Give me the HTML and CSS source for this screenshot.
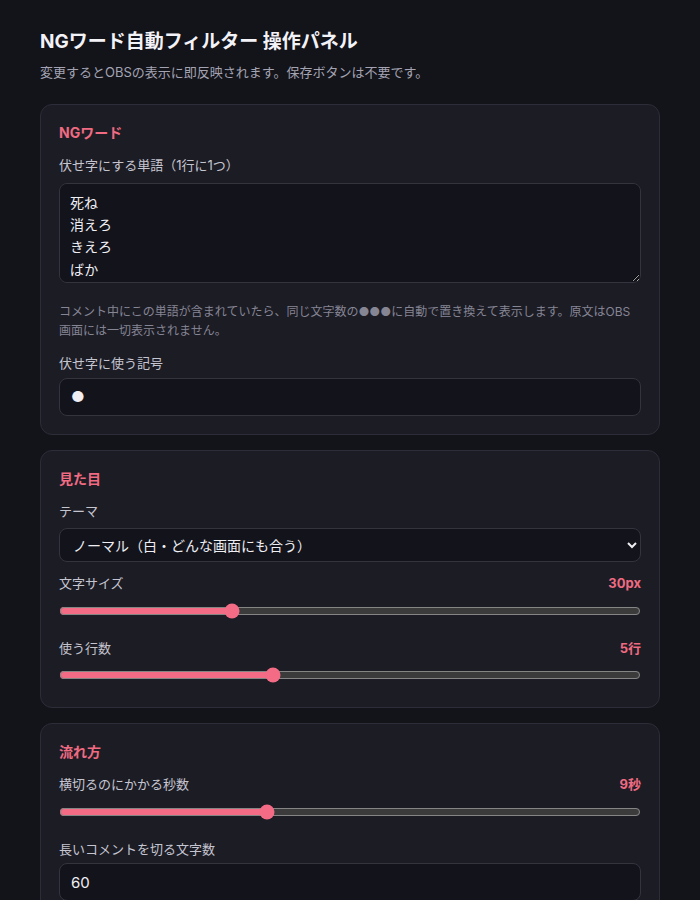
FILE: index.html
```html
<!DOCTYPE html>
<html lang="ja">
<head>
<meta charset="utf-8">
<title>NGワード自動フィルター 操作パネル</title>
<link rel="stylesheet" href="styles.css">
</head>
<body>
<main class="page">
  <h1 class="title">NGワード自動フィルター 操作パネル</h1>
  <p class="subtitle">変更するとOBSの表示に即反映されます。保存ボタンは不要です。</p>

  <section class="card">
    <h2 class="card-title">NGワード</h2>
    <div class="field field-text">
      <label class="label" for="words">伏せ字にする単語（1行に1つ）</label>
      <textarea id="words" class="textarea">死ね
消えろ
きえろ
ばか</textarea>
      <p class="help">コメント中にこの単語が含まれていたら、同じ文字数の●●●に自動で置き換えて表示します。原文はOBS画面には一切表示されません。</p>
    </div>
    <div class="field">
      <label class="label label-tight" for="mask">伏せ字に使う記号</label>
      <input id="mask" class="input" type="text" value="●">
    </div>
  </section>

  <section class="card">
    <h2 class="card-title">見た目</h2>
    <div class="field field-select">
      <label class="label" for="theme">テーマ</label>
      <select id="theme" class="select">
        <option>ノーマル（白・どんな画面にも合う）</option>
      </select>
    </div>
    <div class="field field-range">
      <div class="label-row"><span class="label">文字サイズ</span><span class="value">30px</span></div>
      <input class="range" type="range" min="16" max="64" value="30">
    </div>
    <div class="field field-range">
      <div class="label-row"><span class="label">使う行数</span><span class="value">5行</span></div>
      <input class="range" type="range" min="1" max="12" value="5">
    </div>
  </section>

  <section class="card">
    <h2 class="card-title">流れ方</h2>
    <div class="field field-range">
      <div class="label-row"><span class="label">横切るのにかかる秒数</span><span class="value">9秒</span></div>
      <input class="range" type="range" min="3" max="20" value="9">
    </div>
    <div class="field">
      <label class="label label-tight" for="maxlen">長いコメントを切る文字数</label>
      <input id="maxlen" class="input" type="text" value="60">
    </div>
  </section>
</main>
</body>
</html>
```

FILE: styles.css
```css
html, body {
  margin: 0;
  padding: 0;
  background: #13131a;
  color: #e9e9f0;
  font-family: Inter, "Noto Sans CJK JP", sans-serif;
  color-scheme: dark;
}

.page {
  padding: 28px 40px 40px;
}

.title {
  margin: 0;
  font-size: 19px;
  line-height: 28px;
  font-weight: 700;
  color: #f2f2f7;
}

.subtitle {
  margin: 6px 0 22px;
  font-size: 13px;
  line-height: 20px;
  color: #a3a3b2;
}

.card {
  background: #1c1c25;
  border: 1px solid #2d2d39;
  border-radius: 12px;
  padding: 18px 18px 18px;
  margin-bottom: 15px;
}

.card-title {
  margin: 0 0 13px;
  font-size: 14px;
  line-height: 20px;
  font-weight: 700;
  color: #f06b82;
}

.field {
  margin-bottom: 13px;
}

.field:last-child {
  margin-bottom: 0;
}

.field-select {
  margin-bottom: 12px;
}

.field-range {
  padding-bottom: 6px;
  margin-bottom: 14px;
}

.field-range:last-child {
  padding-bottom: 6px;
}

.label {
  display: block;
  font-size: 13px;
  line-height: 19.5px;
  color: #c5c5d0;
  margin-bottom: 7px;
}

.label-tight {
  margin-bottom: 4px;
}

.label-row {
  display: flex;
  justify-content: space-between;
  align-items: baseline;
  margin-bottom: 9px;
}

.label-row .label {
  margin-bottom: 0;
}

.value {
  font-size: 13px;
  line-height: 19.5px;
  font-weight: 700;
  color: #f06b82;
}

.textarea,
.input,
.select {
  display: block;
  width: 100%;
  box-sizing: border-box;
  background: #13131b;
  border: 1px solid #34343f;
  border-radius: 8px;
  color: #eeeef3;
  font-family: Inter, "Noto Sans CJK JP", sans-serif;
}

.textarea {
  height: 100px;
  padding: 8px 10px;
  font-size: 14px;
  line-height: 22.4px;
  resize: vertical;
  margin: 0;
}

.help {
  margin: 19px 0 0;
  font-size: 12px;
  line-height: 19.8px;
  color: #858594;
}

.input {
  height: 38px;
  padding: 0 11px;
  font-size: 15px;
}

.select {
  height: 34px;
  padding: 0 9px;
  font-size: 14px;
}

.range {
  display: block;
  width: 100%;
  height: 16px;
  margin: 0;
  accent-color: #f36b84;
}
```
